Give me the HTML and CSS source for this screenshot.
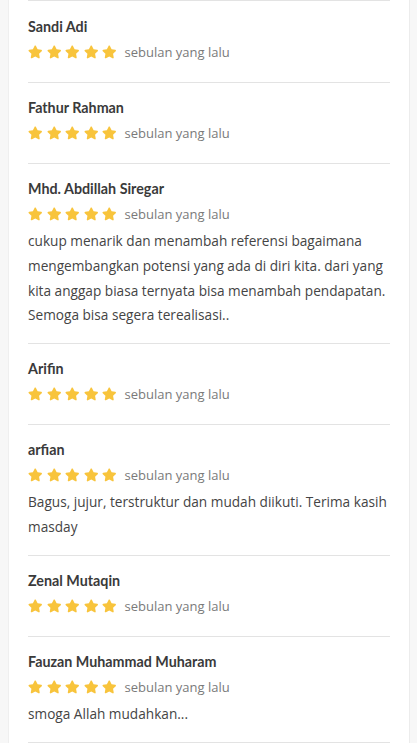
FILE: index.html
```html
<!DOCTYPE html>
<html lang="id">
<head>
<meta charset="utf-8">
<link rel="stylesheet" href="styles.css">
</head>
<body>
<svg width="0" height="0" class="defs" aria-hidden="true">
  <defs>
    <symbol id="star" viewBox="0 0 576 512">
      <path d="M259.3 17.8L194 150.2 47.9 171.5c-26.2 3.8-36.7 36.1-17.7 54.6l105.7 103-25 145.5c-4.5 26.3 23.2 46 46.4 33.7L288 439.6l130.7 68.7c23.2 12.2 50.9-7.4 46.4-33.7l-25-145.5 105.7-103c19-18.5 8.5-50.8-17.7-54.6L382 150.2 316.7 17.8c-11.7-23.6-45.6-23.9-57.4 0z"/>
    </symbol>
  </defs>
</svg>
<div class="card">
  <div class="review first">
    <div class="name">Sandi Adi</div>
    <div class="meta"><span class="stars"><svg><use href="#star"/></svg><svg><use href="#star"/></svg><svg><use href="#star"/></svg><svg><use href="#star"/></svg><svg><use href="#star"/></svg></span><span class="time">sebulan yang lalu</span></div>
  </div>
  <div class="review">
    <div class="name">Fathur Rahman</div>
    <div class="meta"><span class="stars"><svg><use href="#star"/></svg><svg><use href="#star"/></svg><svg><use href="#star"/></svg><svg><use href="#star"/></svg><svg><use href="#star"/></svg></span><span class="time">sebulan yang lalu</span></div>
  </div>
  <div class="review">
    <div class="name">Mhd. Abdillah Siregar</div>
    <div class="meta"><span class="stars"><svg><use href="#star"/></svg><svg><use href="#star"/></svg><svg><use href="#star"/></svg><svg><use href="#star"/></svg><svg><use href="#star"/></svg></span><span class="time">sebulan yang lalu</span></div>
    <p class="text">cukup menarik dan menambah referensi bagaimana mengembangkan potensi yang ada di diri kita. dari yang kita anggap biasa ternyata bisa menambah pendapatan. Semoga bisa segera terealisasi..</p>
  </div>
  <div class="review">
    <div class="name">Arifin</div>
    <div class="meta"><span class="stars"><svg><use href="#star"/></svg><svg><use href="#star"/></svg><svg><use href="#star"/></svg><svg><use href="#star"/></svg><svg><use href="#star"/></svg></span><span class="time">sebulan yang lalu</span></div>
  </div>
  <div class="review">
    <div class="name">arfian</div>
    <div class="meta"><span class="stars"><svg><use href="#star"/></svg><svg><use href="#star"/></svg><svg><use href="#star"/></svg><svg><use href="#star"/></svg><svg><use href="#star"/></svg></span><span class="time">sebulan yang lalu</span></div>
    <p class="text">Bagus, jujur, terstruktur dan mudah diikuti. Terima kasih masday</p>
  </div>
  <div class="review">
    <div class="name">Zenal Mutaqin</div>
    <div class="meta"><span class="stars"><svg><use href="#star"/></svg><svg><use href="#star"/></svg><svg><use href="#star"/></svg><svg><use href="#star"/></svg><svg><use href="#star"/></svg></span><span class="time">sebulan yang lalu</span></div>
  </div>
  <div class="review">
    <div class="name">Fauzan Muhammad Muharam</div>
    <div class="meta"><span class="stars"><svg><use href="#star"/></svg><svg><use href="#star"/></svg><svg><use href="#star"/></svg><svg><use href="#star"/></svg><svg><use href="#star"/></svg></span><span class="time">sebulan yang lalu</span></div>
    <p class="text">smoga Allah mudahkan...</p>
  </div>
  <div class="end"></div>
</div>
</body>
</html>
```
FILE: styles.css
```css
html, body {
  margin: 0;
  padding: 0;
  background: #f7f7f7;
}
body {
  padding: 0 7px 0 8px;
  font-family: "Open Sans", "Liberation Sans", sans-serif;
}
.defs {
  position: absolute;
  width: 0;
  height: 0;
}
.card {
  background: #fff;
  border-left: 1px solid #efefef;
  border-right: 1px solid #ececec;
  padding: 0 19px 0 19px;
  min-height: 743px;
  box-sizing: border-box;
}
.review {
  border-top: 1px solid #e3e3e3;
  padding: 15px 0 15px;
}
.review.first {
  padding-top: 16px;
}
.name {
  font-family: "Lato", "Open Sans", sans-serif;
  font-weight: 700;
  font-size: 14.3px;
  line-height: 20px;
  color: #3a3a3a;
  margin-bottom: 5px;
}
.meta {
  display: flex;
  align-items: center;
  height: 20px;
  margin-bottom: 5px;
}
.stars {
  display: flex;
  gap: 4px;
  margin-right: 8px;
}
.stars svg {
  width: 14.5px;
  height: 14px;
  fill: #f8c43c;
}
.time {
  font-size: 13px;
  color: #7a7a7a;
}
.text {
  margin: 0;
  font-size: 13.65px;
  line-height: 24.8px;
  color: #444;
}
.end {
  border-top: 1px solid #e3e3e3;
}
```
